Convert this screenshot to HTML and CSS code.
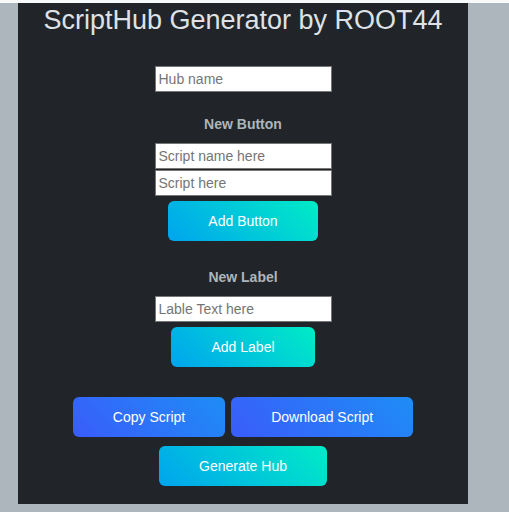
FILE: index.html
```html
<!DOCTYPE html>
<html>
<head>
<meta charset="utf-8">
<link rel="stylesheet" href="styles.css">
</head>
<body>
<div class="panel">
  <h1 class="title">ScriptHub Generator by ROOT44</h1>
  <input class="field hub" type="text" placeholder="Hub name">
  <div class="section-label sec-btn">New Button</div>
  <input class="field" type="text" placeholder="Script name here">
  <input class="field second" type="text" placeholder="Script here">
  <button class="btn teal add">Add Button</button>
  <div class="section-label sec-lbl">New Label</div>
  <input class="field" type="text" placeholder="Lable Text here">
  <button class="btn teal add">Add Label</button>
  <div class="row">
    <button class="btn blue">Copy Script</button>
    <button class="btn blue">Download Script</button>
  </div>
  <button class="btn teal gen">Generate Hub</button>
</div>
</body>
</html>
```
FILE: styles.css
```css
html, body {
  margin: 0;
  padding: 0;
}
body {
  background: #adb5bd;
  border-top: 3px solid #f8f9fa;
  height: 509px;
  font-family: "Liberation Sans", Arial, sans-serif;
}
.panel {
  margin-left: 18px;
  width: 450px;
  height: 501px;
  box-sizing: border-box;
  background: #212529;
  display: flex;
  flex-direction: column;
  align-items: center;
  padding-top: 2px;
}
.title {
  margin: 0;
  font-size: 27px;
  font-weight: normal;
  line-height: 31px;
  color: #dee2e6;
}
.field {
  width: 177px;
  height: 26px;
  box-sizing: border-box;
  border: 1px solid #767676;
  background: #fff;
  padding: 0 3px;
  font-family: "Liberation Sans", Arial, sans-serif;
  font-size: 14px;
  color: #222;
  outline: none;
}
.field::placeholder {
  color: #757575;
}
.hub {
  margin-top: 30px;
}
.second {
  margin-top: 1px;
}
.section-label {
  font-size: 14px;
  font-weight: bold;
  line-height: 16px;
  color: #adb5bd;
  margin-bottom: 11px;
}
.sec-btn {
  margin-top: 24px;
}
.sec-lbl {
  margin-top: 28px;
}
.btn {
  border: none;
  border-radius: 6px;
  padding: 0 40px;
  height: 40px;
  font-family: "Liberation Sans", Arial, sans-serif;
  font-size: 14px;
  color: #fff;
  cursor: pointer;
}
.teal {
  background: linear-gradient(45deg, #00a4ee, #00ecc6);
}
.blue {
  background: linear-gradient(45deg, #3a5cfa, #1e8df6);
}
.add {
  margin-top: 5px;
}
.row {
  display: flex;
  gap: 6px;
  margin-top: 30px;
}
.gen {
  margin-top: 9px;
}
```
